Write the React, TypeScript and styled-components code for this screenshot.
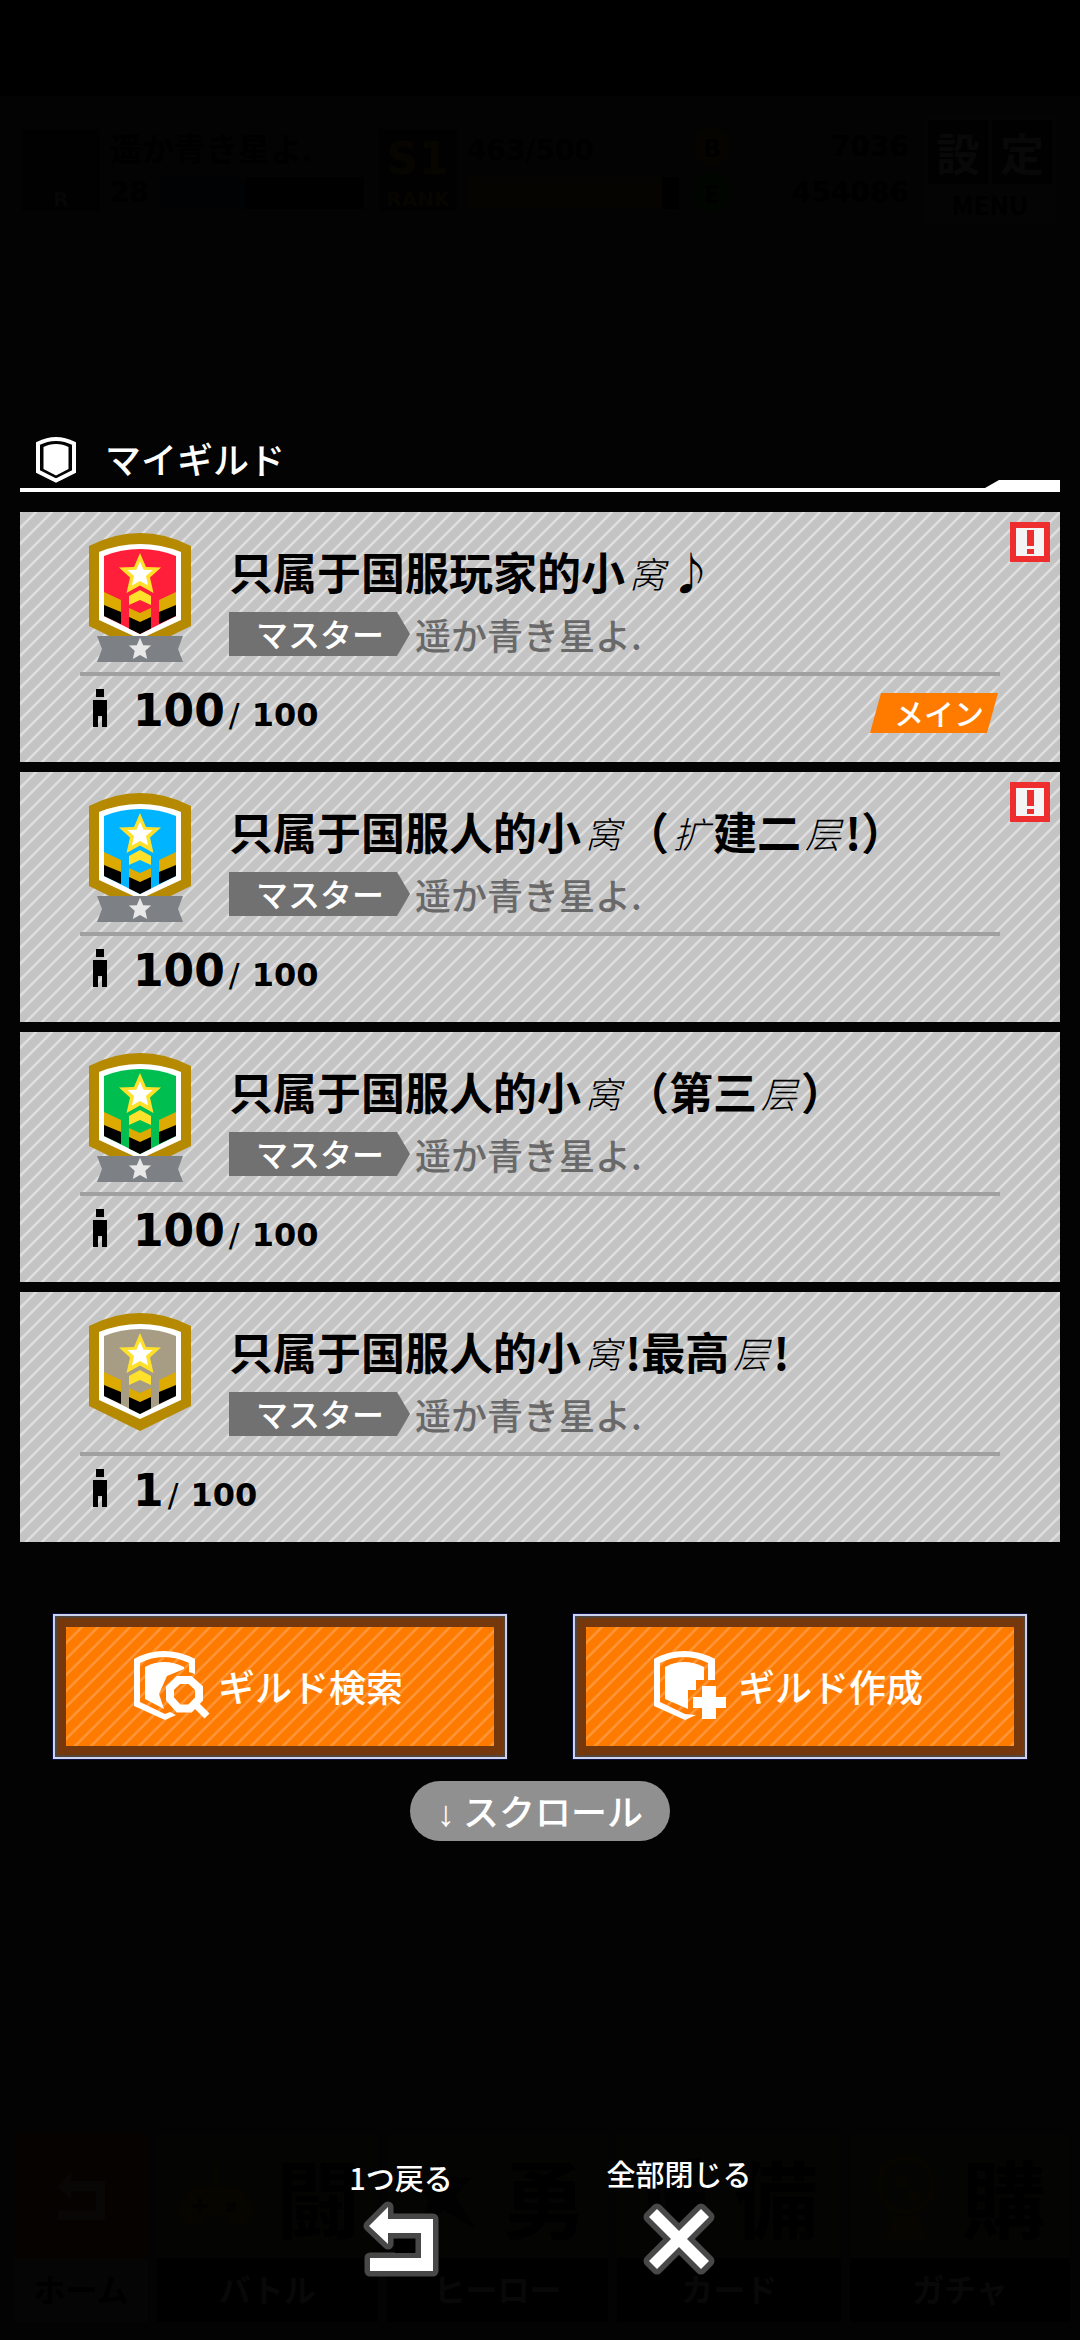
import React from "react";
import styled, { createGlobalStyle } from "styled-components";

const GlobalStyle = createGlobalStyle`
  *, *::before, *::after { box-sizing: border-box; }
  body {
    margin: 0;
    background: #000;
    color: #fff;
    font-family: "Noto Sans CJK JP", "Noto Sans CJK SC", sans-serif;
  }
  a { color: inherit; text-decoration: none; }
  button { font: inherit; color: inherit; border: 0; padding: 0; background: none; cursor: pointer; }
  ul { list-style: none; margin: 0; padding: 0; }
  p, h1, h2 { margin: 0; }
  svg { display: block; flex: none; }
`;

const stripes = (line: string) => `linear-gradient(
  135deg,
  ${line} 0 4%, transparent 7% 43%, ${line} 46% 54%, transparent 57% 93%, ${line} 96%
)`;

/* ---------- layers ---------- */

const Screen = styled.div`
  display: grid;
  min-height: 100vh;
`;

const Backdrop = styled.div`
  grid-area: 1 / 1;
  display: flex;
  flex-direction: column;
  justify-content: space-between;
  border-top: 96px solid #000;
  background: #030303;
  color: #000;
`;

const Modal = styled.main`
  grid-area: 1 / 1;
  display: flex;
  flex-direction: column;
  padding: 428px 20px 61px;
`;

/* ---------- dimmed status bar ---------- */

const Hud = styled.div`
  display: flex;
  align-items: center;
  padding: 20px 24px 0 22px;
  font-weight: 700;
`;

const HudCell = styled.div<{ $grow: number }>`
  flex: ${(p) => p.$grow} 1 0;
  display: flex;
  align-items: center;
  gap: 10px;
  padding-right: 15px;
`;

const Portrait = styled.div<{ $tone: string }>`
  width: 78px;
  height: 82px;
  display: flex;
  flex-direction: column;
  align-items: center;
  justify-content: flex-end;
  background: #010101;
  color: ${(p) => p.$tone};
  font-family: "DejaVu Sans", sans-serif;
  font-size: 20px;
  line-height: 24px;
`;

const RankLetter = styled.span`
  font-size: 44px;
  line-height: 56px;
`;

const HudLines = styled.div`
  flex: 1;
  display: grid;
  gap: 6px;
  font-size: 32px;
  line-height: 40px;
  white-space: nowrap;
`;

const HudNumber = styled.span`
  font-family: "DejaVu Sans", sans-serif;
  font-size: 28px;
  line-height: 40px;
`;

const BarRow = styled.div`
  display: flex;
  align-items: center;
  gap: 10px;
`;

const Bar = styled.div<{ $fill: string; $share: number }>`
  flex: 1;
  height: 32px;
  background: linear-gradient(90deg, ${(p) => p.$fill} ${(p) => p.$share}%, #000 0);
`;

const Wallet = styled.div`
  flex: 1;
  display: flex;
  justify-content: space-between;
  align-items: center;
`;

const Coin = styled.span<{ $tone: string }>`
  width: 36px;
  height: 40px;
  border-radius: 50%;
  background: ${(p) => p.$tone};
  font-size: 24px;
  line-height: 40px;
  text-align: center;
`;

const MenuBox = styled.div`
  width: 132px;
  display: grid;
  grid-template-columns: 1fr 1fr;
  gap: 4px;
  padding: 4px;
  background: #040404;
  text-align: center;
`;

const MenuKanji = styled.span`
  background: #010101;
  color: #080808;
  font-size: 44px;
  line-height: 64px;
`;

const MenuWord = styled.span`
  grid-column: 1 / 3;
  font-size: 26px;
  line-height: 32px;
`;

/* ---------- dimmed tab bar ---------- */

const Tabs = styled.div`
  display: grid;
  grid-template-columns: 134fr 221fr 222fr 224fr 220fr;
  gap: 9px;
  padding: 0 10px 18px 14px;
  font-weight: 700;
`;

const Tab = styled.div<{ $home?: boolean }>`
  background: ${(p) => (p.$home ? "#050200" : "#040403")};
`;

const TabArt = styled.div`
  display: flex;
  align-items: center;
  justify-content: space-evenly;
  height: 124px;
  font-size: 84px;
  line-height: 124px;
`;

const TabName = styled.div<{ $home?: boolean }>`
  background: ${(p) => (p.$home ? "#050505" : "#000")};
  color: ${(p) => (p.$home ? "#000" : "#080808")};
  font-size: 32px;
  line-height: 60px;
  padding-bottom: 4px;
  text-align: center;
`;

/* ---------- dialog heading ---------- */

const Heading = styled.header`
  display: flex;
  align-items: flex-start;
  height: 64px;
  padding: 9px 0 0 16px;
  background:
    linear-gradient(#fff, #fff) bottom / 100% 4px no-repeat;
`;

const HeadingTitle = styled.h1`
  flex: 1;
  padding-left: 29px;
  font-size: 36px;
  line-height: 42px;
  font-weight: 500;
`;

const HeadingTab = styled.span`
  align-self: flex-end;
  width: 75px;
  height: 12px;
  background: #fff;
  clip-path: polygon(0 8px, 14px 0, 100% 0, 100% 100%, 0 100%);
`;

/* ---------- guild cards ---------- */

const GuildList = styled.ul`
  display: grid;
  gap: 10px;
  padding-top: 20px;
`;

const Card = styled.a`
  position: relative;
  display: block;
  padding: 0 60px;
  background: ${stripes("#dedede")} 0 0 / 16px 16px, #c4c4c4;
  color: #000;
`;

const CardTop = styled.div`
  display: flex;
  gap: 38px;
  height: 164px;
  padding: 21px 0 0 9px;
  border-bottom: 4px solid #a0a0a0;
`;

const CardInfo = styled.div`
  flex: 1;
  padding-top: 16px;
`;

const GuildName = styled.h2`
  height: 44px;
  font-family: "Noto Sans CJK SC", "Noto Sans CJK JP", sans-serif;
  font-size: 44px;
  line-height: 44px;
  font-weight: 700;
  white-space: nowrap;
`;

const Brush = styled.span`
  padding: 0 4px;
  font-size: 36px;
  line-height: 36px;
  font-style: italic;
  font-weight: 300;
  vertical-align: 2px;
`;

const MasterRow = styled.p`
  display: flex;
  align-items: center;
  gap: 5px;
  padding-top: 19px;
  color: #696969;
  font-size: 36px;
  line-height: 42px;
  font-weight: 500;
`;

const MasterTag = styled.span`
  width: 181px;
  padding: 0 0 2px 27px;
  background: #717171;
  clip-path: polygon(0 0, 168px 0, 100% 50%, 168px 100%, 0 100%);
  color: #fff;
  font-size: 32px;
`;

const CardBottom = styled.div`
  display: flex;
  align-items: flex-start;
  height: 86px;
  padding: 13px 2px 0 13px;
`;

const Count = styled.p`
  flex: 1;
  display: flex;
  align-items: baseline;
  padding: 2px 0 0 26px;
  font-family: "DejaVu Sans", sans-serif;
  font-size: 44px;
  line-height: 40px;
  font-weight: 700;
`;

const Slash = styled.span`
  padding: 0 12px 0 4px;
  font-size: 32px;
  font-weight: 400;
`;

const Capacity = styled.span`
  font-size: 32px;
`;

const MainTag = styled.span`
  width: 128px;
  margin-top: 4px;
  padding: 0 0 2px 10px;
  background: #ff7b00;
  clip-path: polygon(11px 0, 100% 0, 117px 100%, 0 100%);
  color: #fff;
  font-size: 30px;
  line-height: 38px;
  font-weight: 500;
  text-align: center;
`;

const Alert = styled.span`
  position: absolute;
  top: 10px;
  right: 10px;
  display: grid;
  place-items: center;
  width: 40px;
  height: 40px;
  border: 6px solid #ee2e2e;
  background: #f4f4f4;
`;

/* ---------- actions ---------- */

const Actions = styled.div`
  display: grid;
  grid-template-columns: 1fr 1fr;
  gap: 66px;
  padding: 72px 33px 22px;
`;

const ActionButton = styled.button`
  border: 2px solid #cdd2ee;
  outline: 1px solid #0a1240;
  padding: 11px;
  background: #75380c;
  box-shadow: inset 0 0 0 2px #54453c;
`;

const ActionFace = styled.span`
  display: flex;
  align-items: center;
  gap: 8px;
  height: 119px;
  padding: 0 0 2px 68px;
  background: ${stripes("#ff9738")} 0 0 / 16px 16px, #ff7b00;
  font-size: 37px;
  font-weight: 500;
`;

const ScrollHint = styled.p`
  align-self: center;
  width: 260px;
  height: 60px;
  padding-left: 27px;
  border-radius: 30px;
  background: #909090;
  font-size: 36px;
  line-height: 58px;
  font-weight: 500;
  white-space: nowrap;
`;

const DownArrow = styled.span`
  padding-right: 8px;
  font-family: "Liberation Sans", sans-serif;
  line-height: 36px;
`;

const Footer = styled.footer`
  display: flex;
  justify-content: center;
  align-items: flex-end;
  gap: 128px;
  margin-top: auto;
`;

const FooterButton = styled.button`
  display: flex;
  flex-direction: column;
  align-items: center;
  gap: 6px;
  width: 150px;
  font-size: 29px;
  line-height: 32px;
  font-weight: 500;
  white-space: nowrap;
`;

/* ---------- drawings ---------- */

const STAR = "M0 -21 L6 -7 L21 -6.500 L10 3.500 L13.500 19 L0 11.500 L-13.500 19 L-10 3.500 L-21 -6.500 L-6 -7Z";

const Emblem = ({ color, ribbon }: { color: string; ribbon: boolean }) => (
  <svg width="102" height="130" viewBox="0 0 102 130" aria-hidden="true">
    <path fill="#b58a00" d="M0 13Q25 0 51 0T102 13V93L51 118L0 93Z" />
    <path fill="#fff" d="M10 19Q30 11 51 11T92 19V87L51 106L10 87Z" />
    <path fill={color} d="M15 23Q32 16 51 16T87 23V83L51 101L15 83Z" />
    <path fill="#dcaa00" d="M15 59L32 67V80L15 73ZM87 59L70 67V80L87 73ZM40 75L51 80L62 75V85L51 90L40 85Z" />
    <path fill="#000" d="M15 72L32 79V91L15 83ZM87 72L70 79V91L87 83ZM40 84L51 89L62 84V95.500L51 101L40 95.500Z" />
    <path fill="#ffe02a" d="M40 63L51 57L62 63V72L51 67L40 72Z" />
    <path fill="#ffe02a" transform="translate(51 41)" d={STAR} />
    <path fill="#fff" transform="translate(51 41) scale(.6)" d={STAR} />
    {ribbon && (
      <>
        <path fill="#7d8185" d="M8 103H94L89 116L94 129H8L13 116Z" />
        <path fill="#e8e8e8" transform="translate(51 116) scale(.53)" d={STAR} />
      </>
    )}
  </svg>
);

const ShieldIcon = () => (
  <svg width="40" height="46" viewBox="0 0 40 46" aria-hidden="true">
    <path fill="none" stroke="#fff" strokeWidth="4" d="M2 6.500Q11 2 20 2T38 6.500V34.500L20 43.500L2 34.500Z" />
    <path fill="#fff" d="M7.500 10Q13 7 20 7T32.500 10V32L20 38.500L7.500 32Z" />
  </svg>
);

const SearchGuildIcon = () => (
  <svg width="76" height="70" viewBox="0 0 76 70" aria-hidden="true">
    <path fill="#fff" d="M0 8Q14 0 30 0T61 8V23L55 21V12Q43 6 30 6T6 12V51L31 63L36 61L42 64L31 69L0 55Z" />
    <path fill="#fff" d="M11 16Q20 11 30 11T50 16V18L33 25L25 43L30 58L11 48Z" />
    <path fill="none" stroke="#fff" strokeWidth="8" d="M44.500 29H56L65 37V48L56 57.500H44.500L36 48V37Z" />
    <path stroke="#fff" strokeWidth="7" d="M61 53L73 65" />
  </svg>
);

const CreateGuildIcon = () => (
  <svg width="76" height="70" viewBox="0 0 76 70" aria-hidden="true">
    <path fill="#fff" d="M0 8Q14 0 30 0T61 8V29H54V12Q43 6 30 6T6 12V51L31 63L42 64L31 69L0 55Z" />
    <path fill="#fff" d="M11 16Q20 11 30 11T50 16V29H42V39H34V58L11 48Z" />
    <path fill="#fff" d="M48 35H62V46H72V57H62V68H48V57H39V46H48Z" />
  </svg>
);

const PersonIcon = () => (
  <svg width="14" height="38" viewBox="0 0 14 38" aria-hidden="true">
    <path d="M3 0H11V8H3ZM0 11H14V38H9V27H5V38H0Z" />
  </svg>
);

const AlertMark = () => (
  <svg width="8" height="26" viewBox="0 0 8 26" aria-hidden="true">
    <path fill="#ee2e2e" d="M1 1H8V17H1ZM1 20H8V25H1Z" />
  </svg>
);

const BACK_ARROW = "M8 27L27 8V20H72V72H9V59H60V34H27V45Z";

const BackIcon = () => (
  <svg width="80" height="80" viewBox="0 0 80 80" aria-hidden="true">
    <path fill="#484848" stroke="#484848" strokeWidth="11" strokeLinejoin="round" d={BACK_ARROW} />
    <path fill="#000" d="M34 40H54V54H34Z" />
    <path fill="#fff" d={BACK_ARROW} />
  </svg>
);

const CROSS = "M10 22L18 14L40 36L62 14L70 22L48 44L70 66L62 74L40 52L18 74L10 66L32 44Z";

const CloseIcon = () => (
  <svg width="80" height="84" viewBox="0 0 80 84" aria-hidden="true">
    <path fill="#484848" stroke="#484848" strokeWidth="11" strokeLinejoin="round" d={CROSS} />
    <path fill="#fff" d={CROSS} />
  </svg>
);

const HomeGlyph = () => (
  <svg width="60" height="64" viewBox="0 0 80 80" aria-hidden="true">
    <path fill="#080706" d={BACK_ARROW} />
  </svg>
);

const PadGlyph = () => (
  <svg width="84" height="84" viewBox="0 0 84 84" aria-hidden="true">
    <path fill="#070500" d="M40 8H44V34H66L82 54L72 72H60L52 62H32L24 72H12L2 54L18 34H40Z" />
    <path fill="#020200" d="M18 50H34V54H18ZM24 44H28V60H24ZM52 48H62V58H52Z" />
  </svg>
);

const HeroGlyph = () => (
  <svg width="70" height="84" viewBox="0 0 70 84" aria-hidden="true">
    <path fill="#010101" d="M30 4L38 22L62 24L46 42L66 74L34 56L10 80L20 46L2 30L24 26Z" />
  </svg>
);

const CardGlyph = () => (
  <svg width="70" height="84" viewBox="0 0 70 84" aria-hidden="true">
    <path fill="#010101" d="M20 10L60 4L66 66L28 76ZM4 20L16 16L22 72L10 66Z" />
  </svg>
);

const CapsuleGlyph = () => (
  <svg width="64" height="90" viewBox="0 0 64 90" aria-hidden="true">
    <circle cx="32" cy="34" r="27" fill="none" stroke="#070500" strokeWidth="6" />
    <path fill="#070500" d="M20 66H44L54 88H10ZM22 24H34V36H22ZM34 40H46V50H34Z" />
  </svg>
);

/* ---------- data ---------- */

const guilds = [
  { name: "只属于国服玩家的小窝♪", color: "#ff1f3a", members: 100, ribbon: true, alert: true, main: true },
  { name: "只属于国服人的小窝（扩建二层!）", color: "#00b4ff", members: 100, ribbon: true, alert: true, main: false },
  { name: "只属于国服人的小窝（第三层）", color: "#00bf50", members: 100, ribbon: true, alert: false, main: false },
  { name: "只属于国服人的小窝!最高层!", color: "#a79d84", members: 1, ribbon: false, alert: false, main: false },
];

const tabs = [
  { kanji: "闘", name: "バトル", art: <PadGlyph /> },
  { kanji: "勇", name: "ヒーロー", art: <HeroGlyph /> },
  { kanji: "備", name: "カード", art: <CardGlyph /> },
  { kanji: "購", name: "ガチャ", art: <CapsuleGlyph /> },
];

const thinGlyphs = "窝扩层";

const MixedName = ({ text }: { text: string }) => (
  <GuildName>
    {Array.from(text).map((ch, i) =>
      thinGlyphs.includes(ch) ? <Brush key={i}>{ch}</Brush> : <React.Fragment key={i}>{ch}</React.Fragment>
    )}
  </GuildName>
);

const GuildCard = ({ guild }: { guild: (typeof guilds)[number] }) => (
  <li>
    <Card href="#guild">
      {guild.alert && (
        <Alert>
          <AlertMark />
        </Alert>
      )}
      <CardTop>
        <Emblem color={guild.color} ribbon={guild.ribbon} />
        <CardInfo>
          <MixedName text={guild.name} />
          <MasterRow>
            <MasterTag>マスター</MasterTag>遥か青き星よ.
          </MasterRow>
        </CardInfo>
      </CardTop>
      <CardBottom>
        <PersonIcon />
        <Count>
          {guild.members}
          <Slash>/</Slash>
          <Capacity>100</Capacity>
        </Count>
        {guild.main && <MainTag>メイン</MainTag>}
      </CardBottom>
    </Card>
  </li>
);

const StatusBar = () => (
  <Hud>
    <HudCell $grow={353}>
      <Portrait $tone="#060606">R</Portrait>
      <HudLines>
        <span>遥か青き星よ.</span>
        <BarRow>
          <HudNumber>28</HudNumber>
          <Bar $fill="#010204" $share={42} />
        </BarRow>
      </HudLines>
    </HudCell>
    <HudCell $grow={310}>
      <Portrait $tone="#070500">
        <RankLetter>S1</RankLetter>
        RANK
      </Portrait>
      <HudLines>
        <HudNumber>463/500</HudNumber>
        <Bar $fill="#050400" $share={92} />
      </HudLines>
    </HudCell>
    <HudCell $grow={222}>
      <HudLines>
        <Wallet>
          <Coin $tone="#050400">B</Coin>
          <HudNumber>7036</HudNumber>
        </Wallet>
        <Wallet>
          <Coin $tone="#000500">E</Coin>
          <HudNumber>454086</HudNumber>
        </Wallet>
      </HudLines>
    </HudCell>
    <MenuBox>
      <MenuKanji>設</MenuKanji>
      <MenuKanji>定</MenuKanji>
      <MenuWord>MENU</MenuWord>
    </MenuBox>
  </Hud>
);

const TabBar = () => (
  <Tabs>
    <Tab $home>
      <TabArt>
        <HomeGlyph />
      </TabArt>
      <TabName $home>ホーム</TabName>
    </Tab>
    {tabs.map((tab) => (
      <Tab key={tab.name}>
        <TabArt>
          {tab.art}
          {tab.kanji}
        </TabArt>
        <TabName>{tab.name}</TabName>
      </Tab>
    ))}
  </Tabs>
);

export default function App() {
  return (
    <>
      <GlobalStyle />
      <Screen>
        <Backdrop>
          <StatusBar />
          <TabBar />
        </Backdrop>
        <Modal>
          <Heading>
            <ShieldIcon />
            <HeadingTitle>マイギルド</HeadingTitle>
            <HeadingTab />
          </Heading>
          <GuildList>
            {guilds.map((guild) => (
              <GuildCard key={guild.name} guild={guild} />
            ))}
          </GuildList>
          <Actions>
            <ActionButton type="button">
              <ActionFace>
                <SearchGuildIcon />
                ギルド検索
              </ActionFace>
            </ActionButton>
            <ActionButton type="button">
              <ActionFace>
                <CreateGuildIcon />
                ギルド作成
              </ActionFace>
            </ActionButton>
          </Actions>
          <ScrollHint>
            <DownArrow>↓</DownArrow>スクロール
          </ScrollHint>
          <Footer>
            <FooterButton type="button">
              1つ戻る
              <BackIcon />
            </FooterButton>
            <FooterButton type="button">
              全部閉じる
              <CloseIcon />
            </FooterButton>
          </Footer>
        </Modal>
      </Screen>
    </>
  );
}
